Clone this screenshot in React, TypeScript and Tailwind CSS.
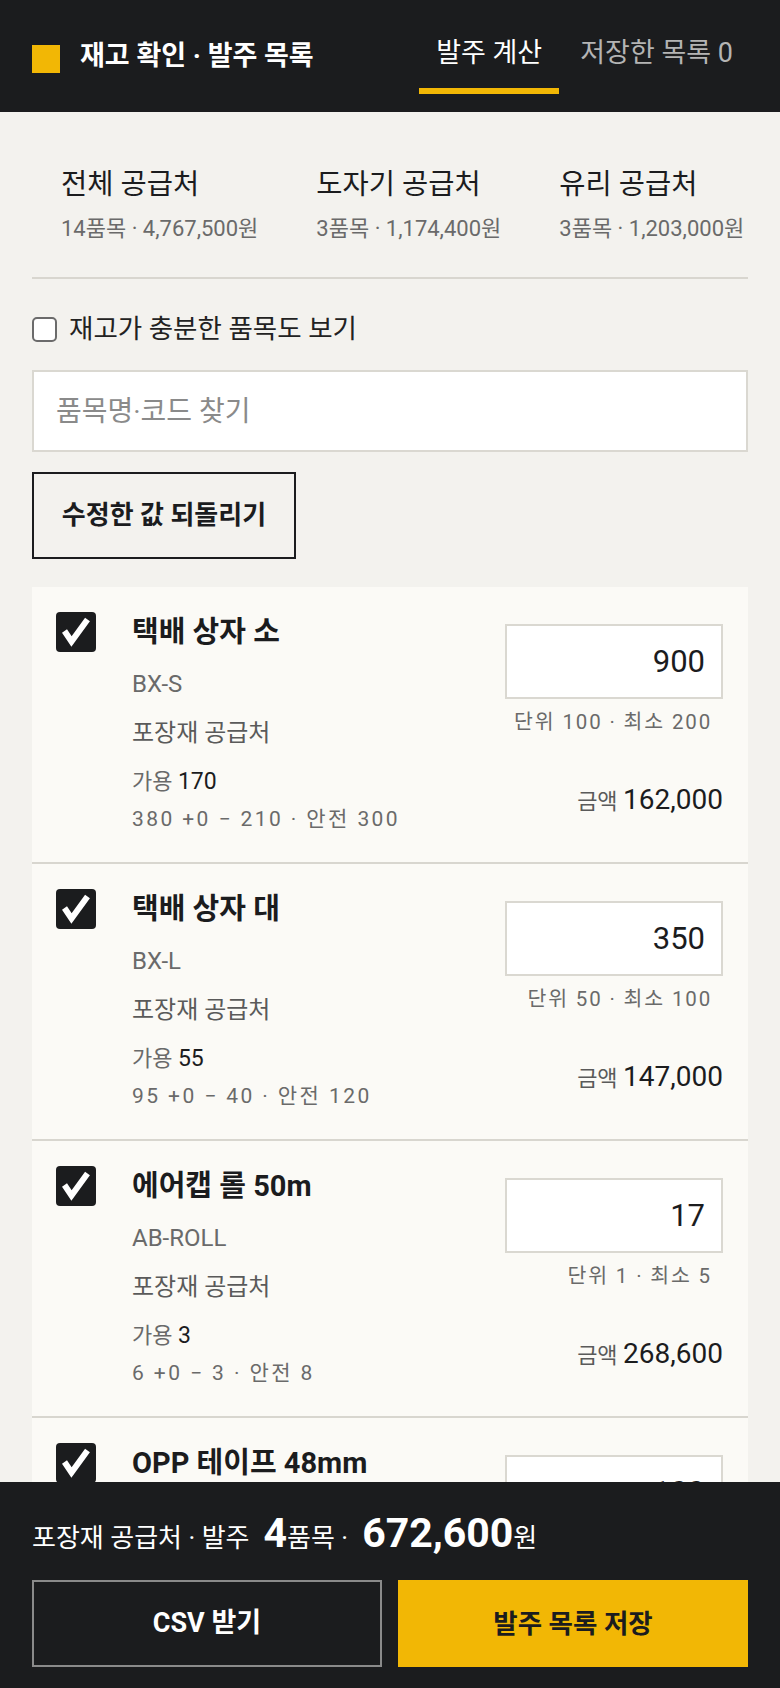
import React, { useState } from 'react';

type Item = {
  id: string;
  name: string;
  code: string;
  supplier: string;
  available: number;
  calc: string;
  qty: number;
  unit: string;
  amount: string;
};

const items: Item[] = [
  { id: 'a', name: '택배 상자 소', code: 'BX-S', supplier: '포장재 공급처', available: 170, calc: '380 +0 − 210 · 안전 300', qty: 900, unit: '단위 100 · 최소 200', amount: '162,000' },
  { id: 'b', name: '택배 상자 대', code: 'BX-L', supplier: '포장재 공급처', available: 55, calc: '95 +0 − 40 · 안전 120', qty: 350, unit: '단위 50 · 최소 100', amount: '147,000' },
  { id: 'c', name: '에어캡 롤 50m', code: 'AB-ROLL', supplier: '포장재 공급처', available: 3, calc: '6 +0 − 3 · 안전 8', qty: 17, unit: '단위 1 · 최소 5', amount: '268,600' },
  { id: 'd', name: 'OPP 테이프 48mm', code: 'TP-48', supplier: '포장재 공급처', available: 40, calc: '120 +0 − 80 · 안전 100', qty: 100, unit: '단위 50 · 최소 100', amount: '95,000' },
];

const summaries = [
  { title: '전체 공급처', sub: '14품목 · 4,767,500원' },
  { title: '도자기 공급처', sub: '3품목 · 1,174,400원' },
  { title: '유리 공급처', sub: '3품목 · 1,203,000원' },
];

const CheckMark = () => (
  <svg width="40" height="40" viewBox="0 0 40 40">
    <polyline points="8.5,19 15.5,29.5 31.5,7.5" fill="none" stroke="#ffffff" strokeWidth="6" strokeLinejoin="miter" />
  </svg>
);

const App: React.FC = () => {
  const [showAll, setShowAll] = useState(false);
  const [search, setSearch] = useState('');

  return (
    <div className="min-h-screen bg-[#f3f2ee] font-['Roboto','Noto_Sans_CJK_KR',sans-serif] text-[#1b1c1e] pb-[220px]">
      {/* Header */}
      <header className="h-[112px] bg-[#1b1c1e] pl-8 pr-[30px] flex justify-between">
        <div className="flex items-center">
          <div className="w-7 h-7 bg-[#f2b705] mt-[5px]" />
          <h1 className="ml-5 text-[27px] font-bold text-white leading-none whitespace-nowrap">재고 확인 · 발주 목록</h1>
        </div>
        <nav className="flex items-start pt-[36px] gap-[4px]">
          <button className="flex flex-col items-center">
            <span className="px-[17px] text-[27px] leading-[34px] text-white whitespace-nowrap">발주 계산</span>
            <span className="mt-[18px] h-[6px] w-full bg-[#f2b705]" />
          </button>
          <button className="px-[17px] text-[27px] leading-[34px] text-[#b4b4b4] whitespace-nowrap">저장한 목록 0</button>
        </nav>
      </header>

      <main className="px-8">
        {/* Supplier summary */}
        <div className="flex overflow-hidden pt-[55px] pb-[34px] border-b-2 border-[#d8d6cf]">
          {summaries.map(s => (
            <button key={s.title} className="px-[29px] text-left shrink-0">
              <div className="text-[28.5px] leading-[36px] text-[#1b1c1e] whitespace-nowrap">{s.title}</div>
              <div className="mt-3 text-[22px] leading-[28px] text-[#6a6a6a] whitespace-nowrap">{s.sub}</div>
            </button>
          ))}
        </div>

        <label className="mt-[33px] flex items-center gap-3 cursor-pointer">
          <span
            className={`w-[25px] h-[25px] rounded-[5px] border-2 border-[#6b6b6b] ${showAll ? 'bg-[#1b1c1e]' : 'bg-white'}`}
            onClick={() => setShowAll(!showAll)}
          />
          <span className="text-[26.5px] leading-[34px] text-[#222]">재고가 충분한 품목도 보기</span>
        </label>

        <input
          type="text"
          value={search}
          onChange={e => setSearch(e.target.value)}
          placeholder="품목명·코드 찾기"
          className="mt-6 block w-full h-[82px] border-2 border-[#dad8d1] bg-white pl-[22px] text-[28px] placeholder:text-[#8a8a8a] outline-none"
        />

        <button className="mt-5 h-[87px] w-[264px] border-2 border-[#1b1c1e] text-[26px] font-bold">
          수정한 값 되돌리기
        </button>

        {/* Items */}
        <div className="mt-7">
          {items.map(item => (
            <div key={item.id} className="h-[277px] bg-[#fbfaf6] border-b-2 border-[#d8d6cf] pt-[25px] pl-6 pr-[25px] flex justify-between">
              <div className="flex">
                <div className="w-10 h-10 rounded-[4px] bg-[#1b1c1e] shrink-0">
                  <CheckMark />
                </div>
                <div className="ml-9">
                  <div className="text-[29px] leading-[40px] font-bold whitespace-nowrap">{item.name}</div>
                  <div className="mt-[18px] text-[24px] leading-[28px] text-[#6a6a6a]">{item.code}</div>
                  <div className="mt-5 text-[24px] leading-[30px] text-[#5a5a5a]">{item.supplier}</div>
                  <div className="mt-[19px] text-[22px] leading-[30px] text-[#6a6a6a]">
                    가용 <span className="text-[23px] text-[#1b1c1e]">{item.available}</span>
                  </div>
                  <div className="mt-[7px] text-[21px] leading-[30px] text-[#6a6a6a] tracking-[0.115em] whitespace-nowrap">{item.calc}</div>
                </div>
              </div>
              <div className="w-[218px] flex flex-col items-end">
                <div className="mt-3 h-[75px] w-full border-2 border-[#dad8d1] bg-white flex items-center justify-end pr-4">
                  <span className="text-[31px] leading-none">{item.qty}</span>
                </div>
                <div className="mt-[9px] pr-[11px] text-[20.5px] leading-[28px] text-[#6a6a6a] tracking-[0.09em] whitespace-nowrap">{item.unit}</div>
                <div className="mt-[46px] leading-[36px] whitespace-nowrap">
                  <span className="text-[22px] text-[#5a5a5a]">금액 </span>
                  <span className="text-[28px] text-[#1b1c1e]">{item.amount}</span>
                </div>
              </div>
            </div>
          ))}
        </div>
      </main>

      {/* Footer bar */}
      <footer className="fixed bottom-0 inset-x-0 h-[206px] bg-[#1b1c1e] px-8 pt-[29px]">
        <div className="h-[44px] flex items-baseline text-white text-[26px] whitespace-nowrap leading-[44px]">
          <span>포장재 공급처 · 발주</span>
          <span className="ml-[14px] text-[41px] font-bold leading-[44px]">4</span>
          <span>품목 ·</span>
          <span className="ml-[14px] text-[41px] font-bold leading-[44px]">672,600</span>
          <span>원</span>
        </div>
        <div className="mt-[25px] grid grid-cols-2 gap-4">
          <button className="h-[87px] border-2 border-[#8a8a8a] text-white text-[27px] font-bold">CSV 받기</button>
          <button className="h-[87px] bg-[#f2b705] text-[#1b1c1e] text-[26.5px] font-bold">발주 목록 저장</button>
        </div>
      </footer>
    </div>
  );
};

export default App;
